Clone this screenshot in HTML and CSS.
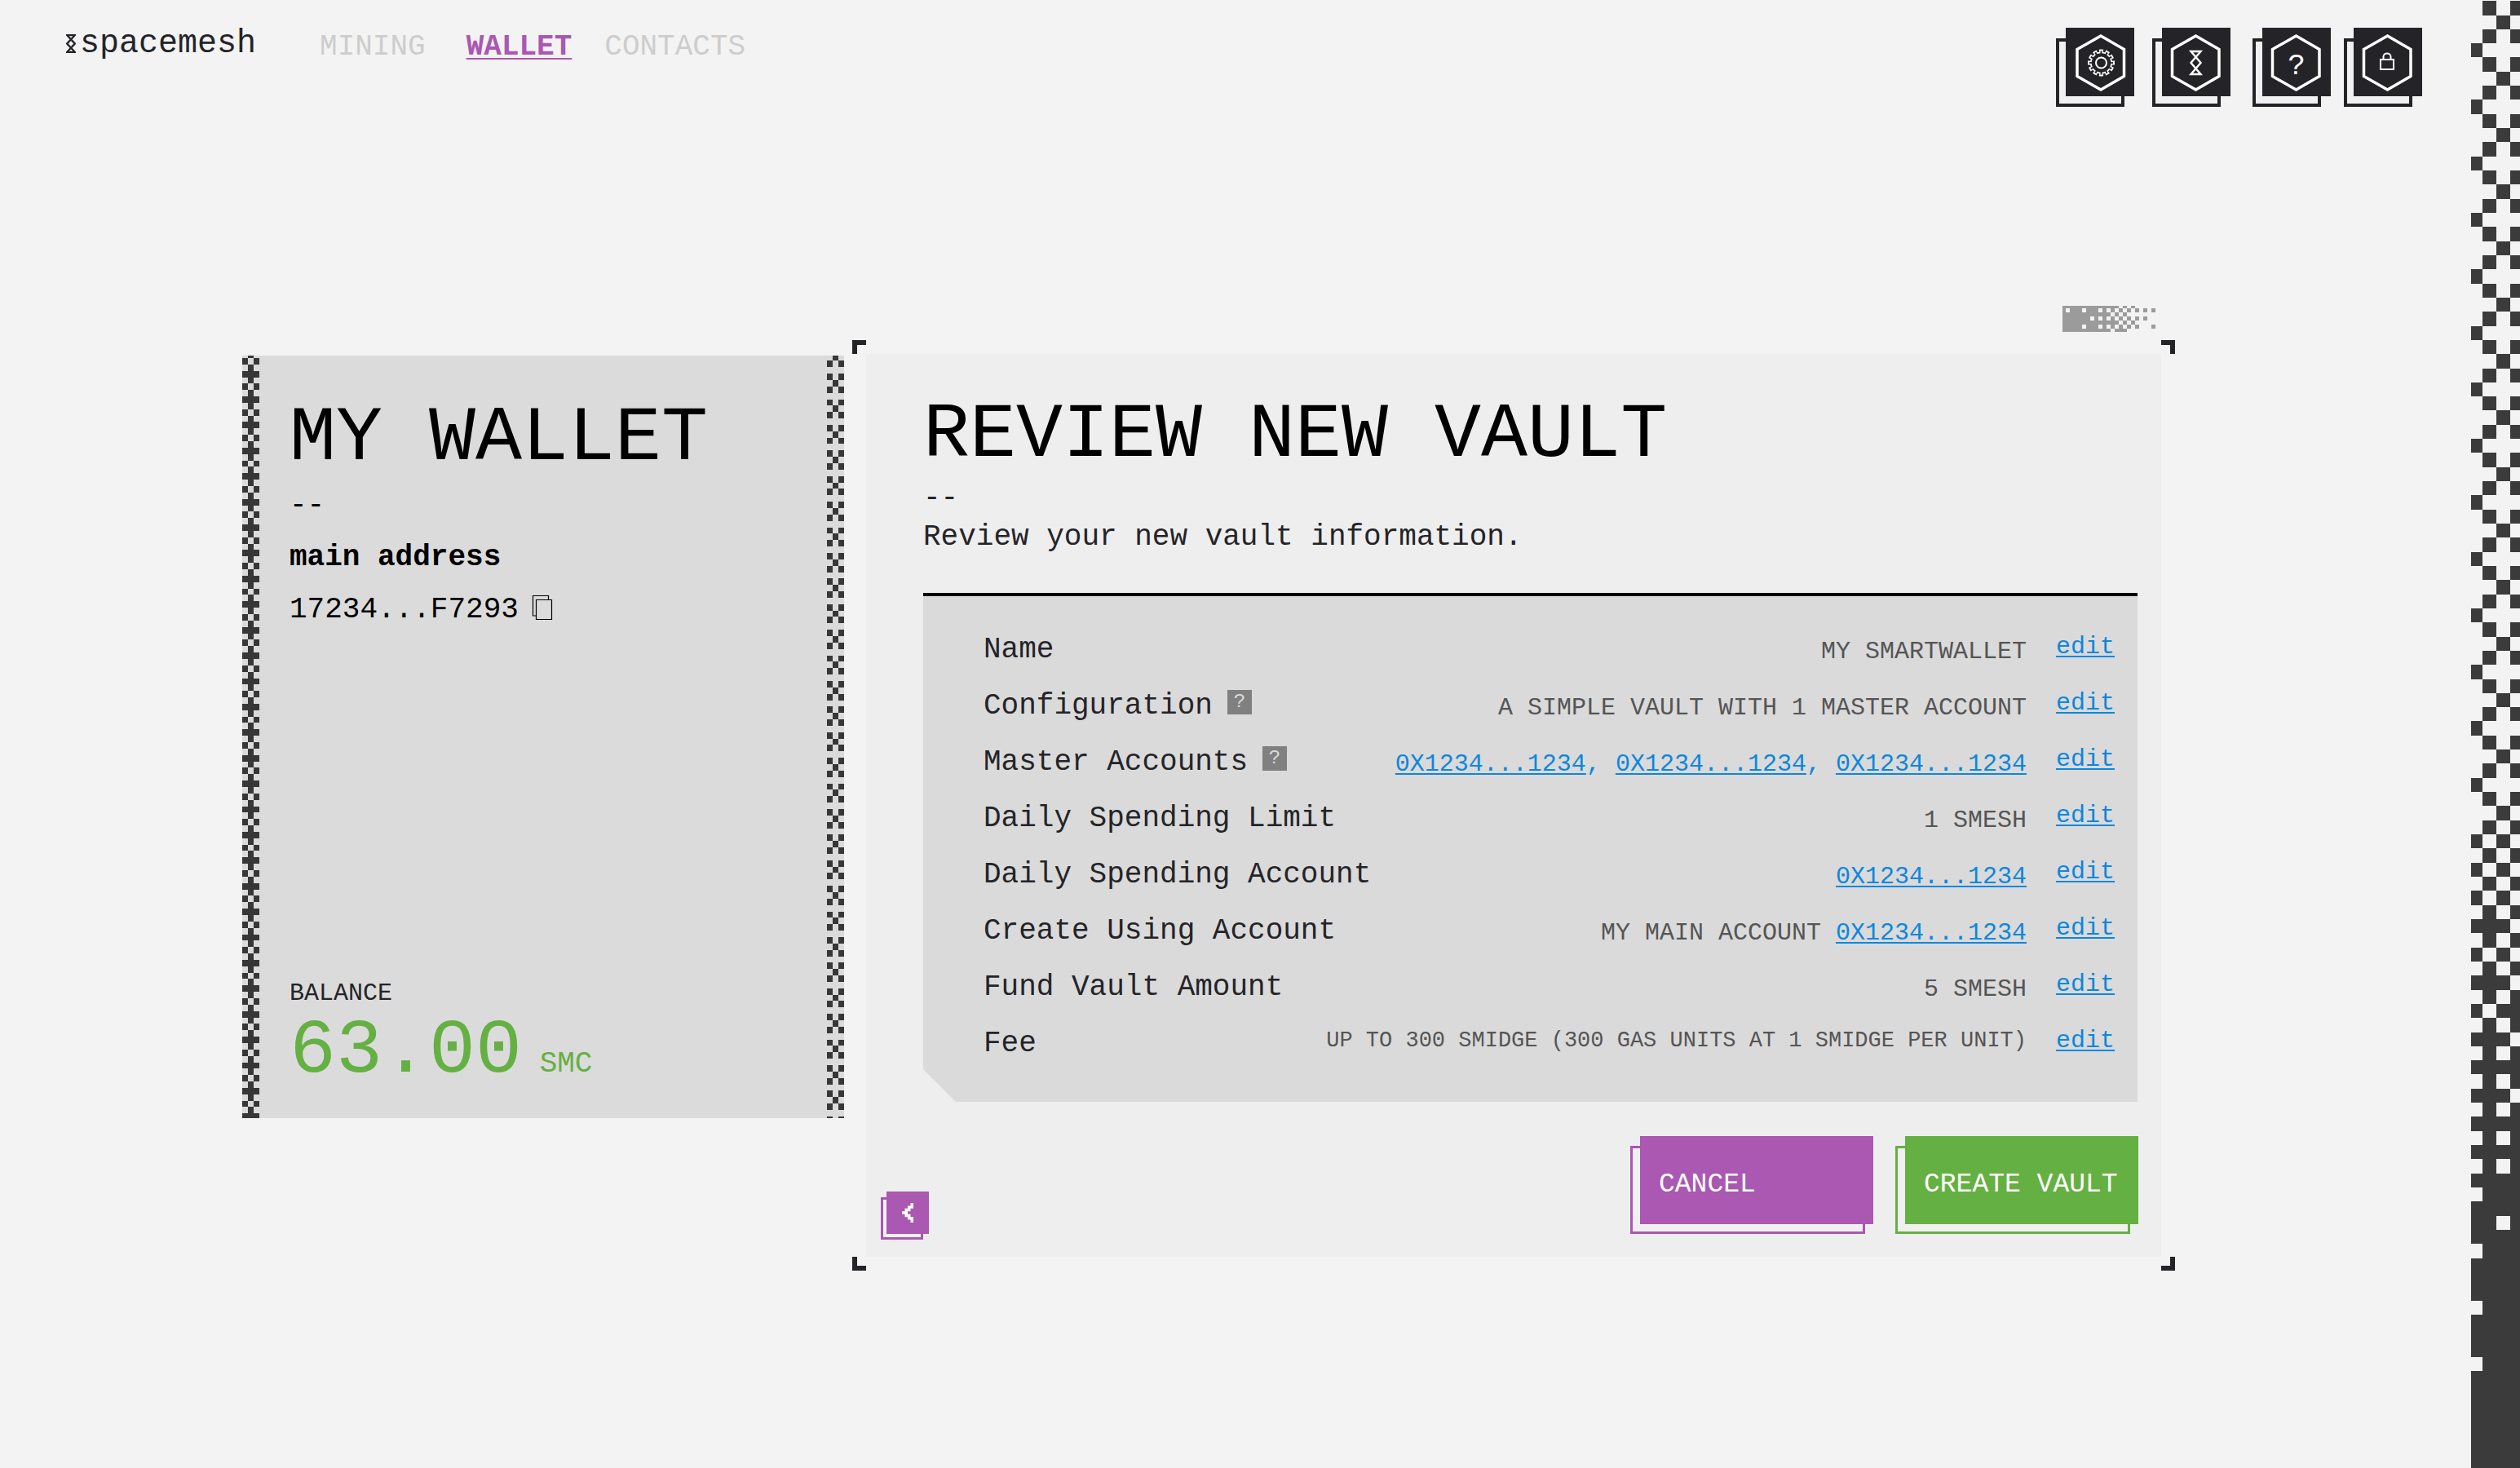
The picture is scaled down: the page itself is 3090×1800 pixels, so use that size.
FILE: index.html
```html
<!DOCTYPE html>
<html lang="en">
<head>
<meta charset="utf-8">
<title>Spacemesh – Review new vault</title>
<link rel="stylesheet" href="styles.css">
</head>
<body>
<div class="page">
  <header class="topbar">
    <a class="logo" href="#">
      <svg class="logo-mark" viewBox="0 0 15 30" preserveAspectRatio="none" aria-hidden="true"><path d="M1.500 1.500H13.500L1.500 15L13.500 28.500H1.500L13.500 15Z"/></svg>
      <span>spacemesh</span>
    </a>
    <nav class="nav">
      <a href="#">MINING</a>
      <a class="active" href="#">WALLET</a>
      <a href="#">CONTACTS</a>
    </nav>
    <div class="tools">
      <button class="stack tool" type="button" aria-label="Settings">
        <svg class="face" viewBox="0 0 84 84" aria-hidden="true">
          <path class="hex" d="M43 10L71.500 26.500V59.500L43 76L14 59.500V26.500Z"/>
          <circle cx="43.500" cy="43" r="13.500" fill="#fff"/>
          <circle class="teeth" cx="43.500" cy="43" r="14.200" pathLength="48" stroke="#fff" stroke-width="4.600" stroke-dasharray="2.600 1.400" stroke-dashoffset="1.300"/>
          <circle cx="43.500" cy="43" r="11.800" fill="#242428"/>
          <circle class="teeth" cx="43.500" cy="43" r="12.800" pathLength="48" stroke="#242428" stroke-width="3.600" stroke-dasharray="1.200 2.800" stroke-dashoffset=".6"/>
          <circle class="thin" cx="43.500" cy="43" r="6.500"/>
        </svg>
      </button>
      <button class="stack tool" type="button" aria-label="Network">
        <svg class="face" viewBox="0 0 84 84" aria-hidden="true">
          <path class="hex" d="M41.500 10L70 26.500V59.500L41.500 76L12.500 59.500V26.500Z"/>
          <path class="line" d="M35.500 29H47.500L35.500 43L47.500 57H35.500L47.500 43Z"/>
        </svg>
      </button>
      <button class="stack tool" type="button" aria-label="Help">
        <svg class="face" viewBox="0 0 84 84" aria-hidden="true">
          <path class="hex" d="M41.500 10L70 26.500V59.500L41.500 76L12.500 59.500V26.500Z"/>
          <text class="mark" x="42" y="57" text-anchor="middle">?</text>
        </svg>
      </button>
      <button class="stack tool" type="button" aria-label="Lock">
        <svg class="face" viewBox="0 0 84 84" aria-hidden="true">
          <path class="hex" d="M41.500 10L70 26.500V59.500L41.500 76L12.500 59.500V26.500Z"/>
          <path class="thin" d="M33 39H49V51H33ZM36.500 39V35.500C36.500 30 45.500 30 45.500 35.500V39"/>
        </svg>
      </button>
    </div>
  </header>

  <main class="content">
    <section class="wallet">
      <svg class="edge" viewBox="0.170 -0.380 2.680 119.100" preserveAspectRatio="none" aria-hidden="true">
        <path d="M1.500 -1V120" stroke-dasharray="1 1"/>
        <path d="M1.500 2V120" stroke-dasharray="1 3"/>
        <path d="M.5 0V120M2.500 0V120" stroke-dasharray="1 1"/>
      </svg>
      <div class="wallet-body">
        <h2 class="title">MY WALLET</h2>
        <p>--</p>
        <p class="strong">main address</p>
        <p class="address">17234...F7293
          <button class="copy" type="button" aria-label="Copy address"><svg viewBox="0 0 26 32" aria-hidden="true"><path d="M5.500 6.500H24.500V30.500H5.500ZM5.500 26H1.500V1.500H20.500V6"/></svg></button>
        </p>
        <div class="balance">
          <div class="balance-label">BALANCE</div>
          <div class="amount">63.00<span class="unit"> SMC</span></div>
        </div>
      </div>
      <svg class="edge" viewBox="0.170 0.180 2.680 119.100" preserveAspectRatio="none" aria-hidden="true">
        <path d="M1.500 0V120" stroke-dasharray="1 3"/>
        <path d="M.5 1V120M2.500 1V120" stroke-dasharray="1 1"/>
      </svg>
    </section>

    <div class="vault">
      <svg class="pixels" viewBox="-0.800 0.330 22.800 6.400" preserveAspectRatio="none" aria-hidden="true">
        <path d="M-1 0H13V1H-1ZM14 0h1v1h-1zM16 0h1v1h-1z
          M-1 1H0V2H-1ZM1 1H4V2H1ZM5 1H8V2H5ZM9 1h1v1h-1zM11 1h1v1h-1zM13 1h1v1h-1zM15 1h1v1h-1zM17 1h1v1h-1zM19 1h1v1h-1zM21 1h1v1h-1z
          M-1 2H11V3H-1ZM12 2h1v1h-1zM14 2h1v1h-1z
          M-1 3H6V4H-1ZM7 3h1v1h-1zM9 3h1v1h-1zM11 3h1v1h-1zM13 3h1v1h-1zM15 3h1v1h-1zM17 3h1v1h-1zM19 3h1v1h-1z
          M-1 4H13V5H-1ZM14 4h1v1h-1zM16 4h1v1h-1z
          M-1 5H4V6H-1ZM5 5H8V6H5ZM9 5h1v1h-1zM11 5h1v1h-1zM13 5h1v1h-1zM15 5h1v1h-1zM17 5h1v1h-1zM21 5h1v1h-1z
          M-1 6H11V7H-1ZM12 6H15V7H12Z"/>
      </svg>
      <section class="panel">
        <span class="corner top left"></span>
        <span class="corner top right"></span>
        <span class="corner bottom left"></span>
        <span class="corner bottom right"></span>
        <div class="panel-body">
          <h1 class="title">REVIEW NEW VAULT</h1>
          <p class="lead">--<br>Review your new vault information.</p>
          <div class="sheet">
            <table class="review">
              <colgroup><col class="col-label"><col><col class="col-edit"></colgroup>
              <tr><th scope="row">Name</th><td class="value">MY SMARTWALLET</td><td class="edit"><a href="#">edit</a></td></tr>
              <tr><th scope="row">Configuration<button class="hint" type="button">?</button></th><td class="value">A SIMPLE VAULT WITH 1 MASTER ACCOUNT</td><td class="edit"><a href="#">edit</a></td></tr>
              <tr><th scope="row">Master Accounts<button class="hint" type="button">?</button></th><td class="value list"><a href="#">0X1234...1234</a>, <a href="#">0X1234...1234</a>, <a href="#">0X1234...1234</a></td><td class="edit"><a href="#">edit</a></td></tr>
              <tr><th scope="row">Daily Spending Limit</th><td class="value">1 SMESH</td><td class="edit"><a href="#">edit</a></td></tr>
              <tr><th scope="row">Daily Spending Account</th><td class="value"><a href="#">0X1234...1234</a></td><td class="edit"><a href="#">edit</a></td></tr>
              <tr><th scope="row">Create Using Account</th><td class="value">MY MAIN ACCOUNT <a href="#">0X1234...1234</a></td><td class="edit"><a href="#">edit</a></td></tr>
              <tr><th scope="row">Fund Vault Amount</th><td class="value">5 SMESH</td><td class="edit"><a href="#">edit</a></td></tr>
              <tr><th scope="row">Fee</th><td class="value small">UP TO 300 SMIDGE (300 GAS UNITS AT 1 SMIDGE PER UNIT)</td><td class="edit"><a href="#">edit</a></td></tr>
            </table>
          </div>
        </div>
        <div class="panel-foot">
          <button class="stack back" type="button" aria-label="Back">
            <span class="face"><svg viewBox="0 0 4 7" preserveAspectRatio="none" aria-hidden="true"><path d="M3 0H4V2H3V3H2V4H3V5H4V7H3V6H2V5H1V4H0V3H1V2H2V1H3Z"/></svg></span>
          </button>
          <div class="actions">
            <button class="stack action purple" type="button"><span class="face">CANCEL</span></button>
            <button class="stack action green" type="button"><span class="face">CREATE VAULT</span></button>
          </div>
        </div>
      </section>
    </div>
  </main>
</div>

<aside class="strip" aria-hidden="true">
  <svg viewBox="0.150 -0.070 3.530 103.930" preserveAspectRatio="none">
    <g stroke="#3b3b3b">
      <path d="M1.500 0V59M3.500 0V59" stroke-dasharray="1 1"/>
      <path d="M2.500 1V59M.5 3V59" stroke-dasharray="1 3"/>
      <path d="M.5 59V105M1.500 59V105M2.500 59V105M3.500 59V105"/>
    </g>
    <g stroke="#f3f3f3">
      <path d="M.5 60V83M2.500 60V83M1.500 59V64M3.500 59V70" stroke-dasharray="1 1"/>
      <path d="M1.500 67v1M1.500 71v1M3.500 73v1M3.500 77v1M.5 84v1M2.500 86v1M.5 88v1M.5 92v1M.5 96v1"/>
    </g>
  </svg>
</aside>
</body>
</html>
```
FILE: styles.css
```css
* {
  box-sizing: border-box;
}

body {
  margin: 0;
  min-height: 100vh;
  display: flex;
  background: #f3f3f3;
  color: #000;
  font-family: "Liberation Mono", "Courier New", monospace;
  font-size: 36px;
}

h1, h2, p {
  margin: 0;
  font-weight: 400;
}

button {
  margin: 0;
  padding: 0;
  border: 0;
  background: none;
  font: inherit;
  color: inherit;
  cursor: pointer;
}

svg {
  display: block;
}

.page {
  flex: 1;
  min-width: 0;
}

/* Header */

.topbar {
  display: flex;
  align-items: flex-start;
  padding: 34px 60px 0 81px;
}

.logo {
  display: flex;
  align-items: flex-end;
  gap: 5px;
  font-size: 40px;
  line-height: 40px;
  color: #242428;
  text-decoration: none;
}

.logo-mark {
  width: 12px;
  height: 23px;
  margin-bottom: 9px;
  fill: none;
  stroke: #242428;
  stroke-width: 3;
}

.nav {
  display: flex;
  margin: 4px 0 0 78px;
  line-height: 40px;
}

.nav a {
  color: #cdcdcd;
  text-decoration: none;
  margin-right: 50px;
}

.nav a.active {
  margin-right: 40px;
  color: #aa58b1;
  font-weight: 700;
  text-decoration: underline;
  text-decoration-thickness: 2px;
  text-underline-offset: 4px;
}

.tools {
  display: grid;
  grid-template-columns: 118px 123px 112px 96px;
  margin-left: auto;
}

/* Face with an offset outline behind it */

.stack {
  display: grid;
  --tone: #242428;
}

.stack::before {
  content: "";
  grid-area: 1 / 1;
  margin: 13px 12px 0 0;
  border: 4px solid var(--tone);
  background: #f0f0f0;
}

.stack .face {
  grid-area: 1 / 1;
  margin: 0 0 13px 12px;
  background: var(--tone);
}

.tool {
  width: 96px;
  height: 97px;
}

.tool .face {
  width: 84px;
  height: 84px;
  fill: none;
}

.hex {
  stroke: #fff;
  stroke-width: 3.5;
}

.line {
  stroke: #fff;
  stroke-width: 2.4;
}

.thin {
  stroke: #fff;
  stroke-width: 2;
}

.mark {
  fill: #fff;
  font-size: 36px;
}

/* Main area */

.content {
  display: flex;
  align-items: flex-start;
  gap: 27px;
  padding: 244px 380px 60px 297px;
}

.title {
  font-size: 95px;
  line-height: 96px;
}

.wallet {
  flex: 0 0 738px;
  display: flex;
  min-height: 935px;
  margin-top: 61px;
  background: #dbdbdb;
}

.edge {
  flex: none;
  width: 21px;
  height: 935px;
  stroke: #373737;
  stroke-width: 1;
  shape-rendering: crispEdges;
}

.wallet-body {
  flex: 1;
  display: flex;
  flex-direction: column;
  padding: 54px 0 34px 37px;
}

.wallet-body p {
  line-height: 64px;
}

.wallet-body .title {
  margin-bottom: 2px;
}

.strong {
  font-weight: 700;
}

.address {
  display: flex;
  align-items: center;
  gap: 16px;
}

.copy {
  margin-bottom: 6px;
}

.copy svg {
  width: 26px;
  height: 32px;
  fill: none;
  stroke: #000;
  stroke-width: 1.2;
}

.balance {
  display: flex;
  flex-direction: column;
  gap: 3px;
  margin-top: auto;
}

.balance-label {
  font-size: 30px;
  line-height: 40px;
  color: #242428;
}

.amount {
  font-size: 95px;
  line-height: 96px;
  color: #65b042;
}

.unit {
  font-size: 36px;
  line-height: 36px;
}

/* Vault panel */

.vault {
  flex: 1;
  min-width: 0;
}

.pixels {
  width: 114px;
  height: 32px;
  margin: 0 7px 27px auto;
  fill: #9b9b9b;
  shape-rendering: crispEdges;
}

.panel {
  position: relative;
  background: #eee;
}

.corner {
  position: absolute;
  width: 17px;
  height: 17px;
  border: 0 solid #242428;
}

.corner.top {
  top: -17px;
  border-top-width: 6px;
}

.corner.bottom {
  bottom: -17px;
  border-bottom-width: 6px;
}

.corner.left {
  left: -17px;
  border-left-width: 6px;
}

.corner.right {
  right: -17px;
  border-right-width: 6px;
}

.panel-body {
  padding: 52px 29px 0 70px;
}

.lead {
  margin: 5px 0 44px;
  line-height: 48px;
  color: #242428;
}

.sheet {
  padding: 42px 28px 26px 74px;
  border-top: 4px solid #000;
  background: #dadada;
  clip-path: polygon(0 0, 100% 0, 100% 100%, 40px 100%, 0 calc(100% - 40px));
}

.review {
  width: 100%;
  table-layout: fixed;
  border-collapse: collapse;
}

.col-label {
  width: 400px;
}

.col-edit {
  width: 108px;
}

.review tr {
  height: 69px;
}

.review th,
.review td {
  padding: 0;
  vertical-align: top;
  white-space: nowrap;
}

.review th {
  font-weight: 400;
  text-align: left;
  line-height: 48px;
  color: #242428;
}

.hint {
  width: 30px;
  height: 30px;
  margin-left: 18px;
  vertical-align: 8px;
  background: #808080;
  color: #dadada;
  font-size: 24px;
  line-height: 30px;
}

.review .value {
  font-size: 30px;
  line-height: 52px;
  text-align: right;
  color: #555;
}

.review .small {
  font-size: 27px;
  line-height: 40px;
}

.review .edit {
  padding-left: 36px;
  font-size: 30px;
  line-height: 40px;
}

.review .list,
.review a {
  color: #0d87dd;
}

.review a {
  text-decoration-thickness: 2px;
  text-underline-offset: 3px;
}

.panel-foot {
  display: flex;
  justify-content: space-between;
  align-items: flex-end;
  padding: 42px 28px 21px 18px;
}

.back {
  --tone: #aa58b1;
  width: 59px;
  height: 59px;
}

.back::before {
  margin: 7px 7px 0 0;
  border-width: 3px;
}

.back .face {
  display: grid;
  place-items: center;
  margin: 0 0 7px 7px;
}

.back svg {
  width: 14px;
  height: 24px;
  fill: #fff;
}

.actions {
  display: flex;
  gap: 27px;
  padding-bottom: 7px;
}

.action {
  width: 298px;
  height: 120px;
  font-size: 33px;
  color: #fff;
}

.action::before {
  margin: 12px 10px 0 0;
  border-width: 3px;
}

.action .face {
  display: flex;
  align-items: center;
  margin: 0 0 12px 12px;
  padding: 10px 0 0 23px;
}

.purple {
  --tone: #aa58b1;
}

.green {
  --tone: #65b042;
}

/* Pixel strip on the right edge */

.strip {
  flex: none;
  width: 60px;
  display: flex;
}

.strip svg {
  width: 60px;
  height: 100vh;
  stroke-width: 1;
  shape-rendering: crispEdges;
}
```
